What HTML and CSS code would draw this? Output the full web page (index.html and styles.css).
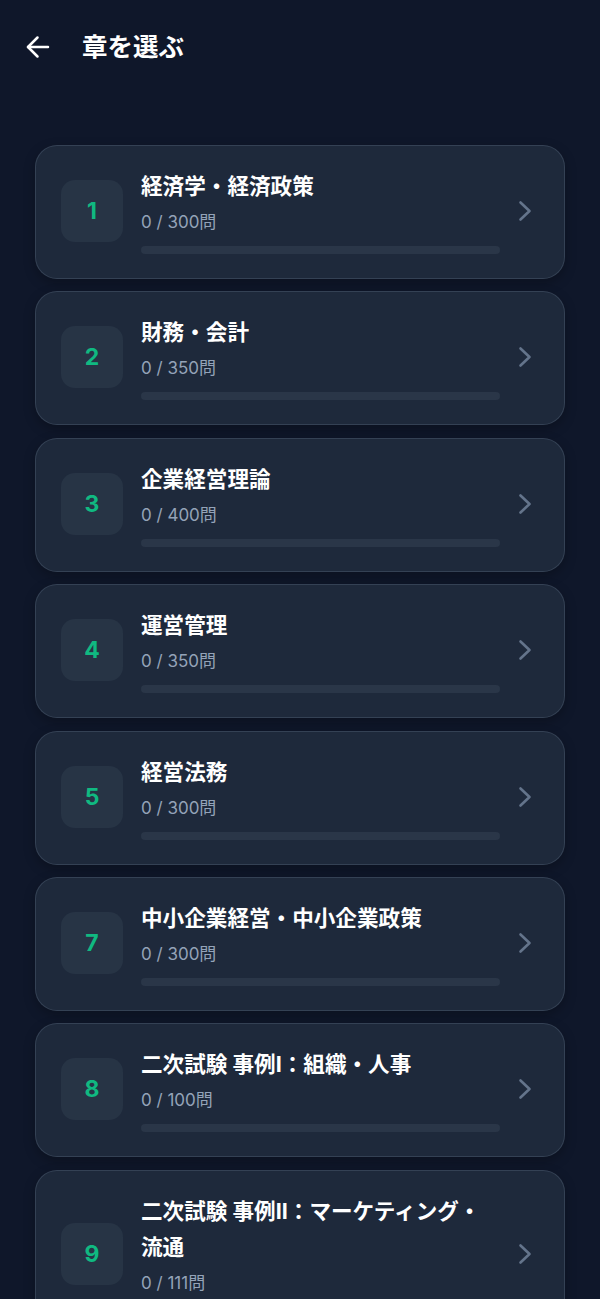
FILE: index.html
```html
<!DOCTYPE html>
<html lang="ja">
<head>
<meta charset="utf-8">
<title>章を選ぶ</title>
<link rel="stylesheet" href="styles.css">
</head>
<body>
<header class="header">
  <svg class="back" width="24" height="24" viewBox="0 0 24 24" fill="none" stroke="#ffffff" stroke-width="2.5" stroke-linecap="round" stroke-linejoin="round"><path d="M22 12H2"/><path d="M11.5 21.5L2 12l9.5-9.5"/></svg>
  <h1 class="title">章を選ぶ</h1>
</header>
<main class="list">
  <div class="card"><div class="num">1</div><div class="info"><div class="name">経済学・経済政策</div><div class="count">0 / 300問</div><div class="bar"><div class="fill" style="width:0%"></div></div></div><svg class="chev" width="14" height="22" viewBox="0 0 14 22" fill="none" stroke="#64748b" stroke-width="2.6" stroke-linecap="round" stroke-linejoin="round"><path d="M2.5 2.5L11.5 11L2.5 19.5"/></svg></div>
  <div class="card"><div class="num">2</div><div class="info"><div class="name">財務・会計</div><div class="count">0 / 350問</div><div class="bar"><div class="fill" style="width:0%"></div></div></div><svg class="chev" width="14" height="22" viewBox="0 0 14 22" fill="none" stroke="#64748b" stroke-width="2.6" stroke-linecap="round" stroke-linejoin="round"><path d="M2.5 2.5L11.5 11L2.5 19.5"/></svg></div>
  <div class="card"><div class="num">3</div><div class="info"><div class="name">企業経営理論</div><div class="count">0 / 400問</div><div class="bar"><div class="fill" style="width:0%"></div></div></div><svg class="chev" width="14" height="22" viewBox="0 0 14 22" fill="none" stroke="#64748b" stroke-width="2.6" stroke-linecap="round" stroke-linejoin="round"><path d="M2.5 2.5L11.5 11L2.5 19.5"/></svg></div>
  <div class="card"><div class="num">4</div><div class="info"><div class="name">運営管理</div><div class="count">0 / 350問</div><div class="bar"><div class="fill" style="width:0%"></div></div></div><svg class="chev" width="14" height="22" viewBox="0 0 14 22" fill="none" stroke="#64748b" stroke-width="2.6" stroke-linecap="round" stroke-linejoin="round"><path d="M2.5 2.5L11.5 11L2.5 19.5"/></svg></div>
  <div class="card"><div class="num">5</div><div class="info"><div class="name">経営法務</div><div class="count">0 / 300問</div><div class="bar"><div class="fill" style="width:0%"></div></div></div><svg class="chev" width="14" height="22" viewBox="0 0 14 22" fill="none" stroke="#64748b" stroke-width="2.6" stroke-linecap="round" stroke-linejoin="round"><path d="M2.5 2.5L11.5 11L2.5 19.5"/></svg></div>
  <div class="card"><div class="num">7</div><div class="info"><div class="name">中小企業経営・中小企業政策</div><div class="count">0 / 300問</div><div class="bar"><div class="fill" style="width:0%"></div></div></div><svg class="chev" width="14" height="22" viewBox="0 0 14 22" fill="none" stroke="#64748b" stroke-width="2.6" stroke-linecap="round" stroke-linejoin="round"><path d="M2.5 2.5L11.5 11L2.5 19.5"/></svg></div>
  <div class="card"><div class="num">8</div><div class="info"><div class="name">二次試験 事例I：組織・人事</div><div class="count">0 / 100問</div><div class="bar"><div class="fill" style="width:0%"></div></div></div><svg class="chev" width="14" height="22" viewBox="0 0 14 22" fill="none" stroke="#64748b" stroke-width="2.6" stroke-linecap="round" stroke-linejoin="round"><path d="M2.5 2.5L11.5 11L2.5 19.5"/></svg></div>
  <div class="card"><div class="num">9</div><div class="info"><div class="name">二次試験 事例II：マーケティング・流通</div><div class="count">0 / 111問</div><div class="bar"><div class="fill" style="width:0%"></div></div></div><svg class="chev" width="14" height="22" viewBox="0 0 14 22" fill="none" stroke="#64748b" stroke-width="2.6" stroke-linecap="round" stroke-linejoin="round"><path d="M2.5 2.5L11.5 11L2.5 19.5"/></svg></div>
</main>
</body>
</html>
```

FILE: styles.css
```css
* { box-sizing: border-box; }
html, body {
  margin: 0;
  padding: 0;
  background: #0f172a;
  font-family: "Inter", "Noto Sans CJK JP", sans-serif;
  color: #ffffff;
}
body {
  min-height: 1299px;
  overflow: hidden;
}
.header {
  height: 94px;
  display: flex;
  align-items: center;
  padding: 0 0 0 26px;
  gap: 32px;
}
.back { flex: none; }
.title {
  margin: 0;
  font-size: 25.5px;
  font-weight: 700;
  line-height: 1;
  letter-spacing: 0;
}
.list {
  display: flex;
  flex-direction: column;
  gap: 12.4px;
  padding: 51px 35px 40px 35px;
}
.card {
  display: flex;
  align-items: center;
  background: #1e293b;
  border: 1px solid rgba(71, 85, 105, 0.55);
  border-radius: 22px;
  padding: 22px 32px 24px 25px;
  box-shadow: 0 4px 12px rgba(0, 0, 0, 0.25);
}
.num {
  flex: none;
  width: 62px;
  height: 62px;
  border-radius: 14px;
  background: #273445;
  color: #10b981;
  font-size: 23px;
  font-weight: 700;
  display: flex;
  align-items: center;
  justify-content: center;
}
.info {
  flex: 1;
  min-width: 0;
  margin: 0 18px;
  display: flex;
  flex-direction: column;
}
.name {
  font-size: 21.6px;
  font-weight: 700;
  line-height: 36px;
  color: #ffffff;
}
.count {
  margin-top: 6px;
  font-size: 17px;
  line-height: 24px;
  color: #94a3b8;
}
.bar {
  margin-top: 12px;
  height: 8px;
  border-radius: 4px;
  background: #2a3648;
  overflow: hidden;
}
.fill {
  height: 100%;
  background: #10b981;
}
.chev { flex: none; }
```
